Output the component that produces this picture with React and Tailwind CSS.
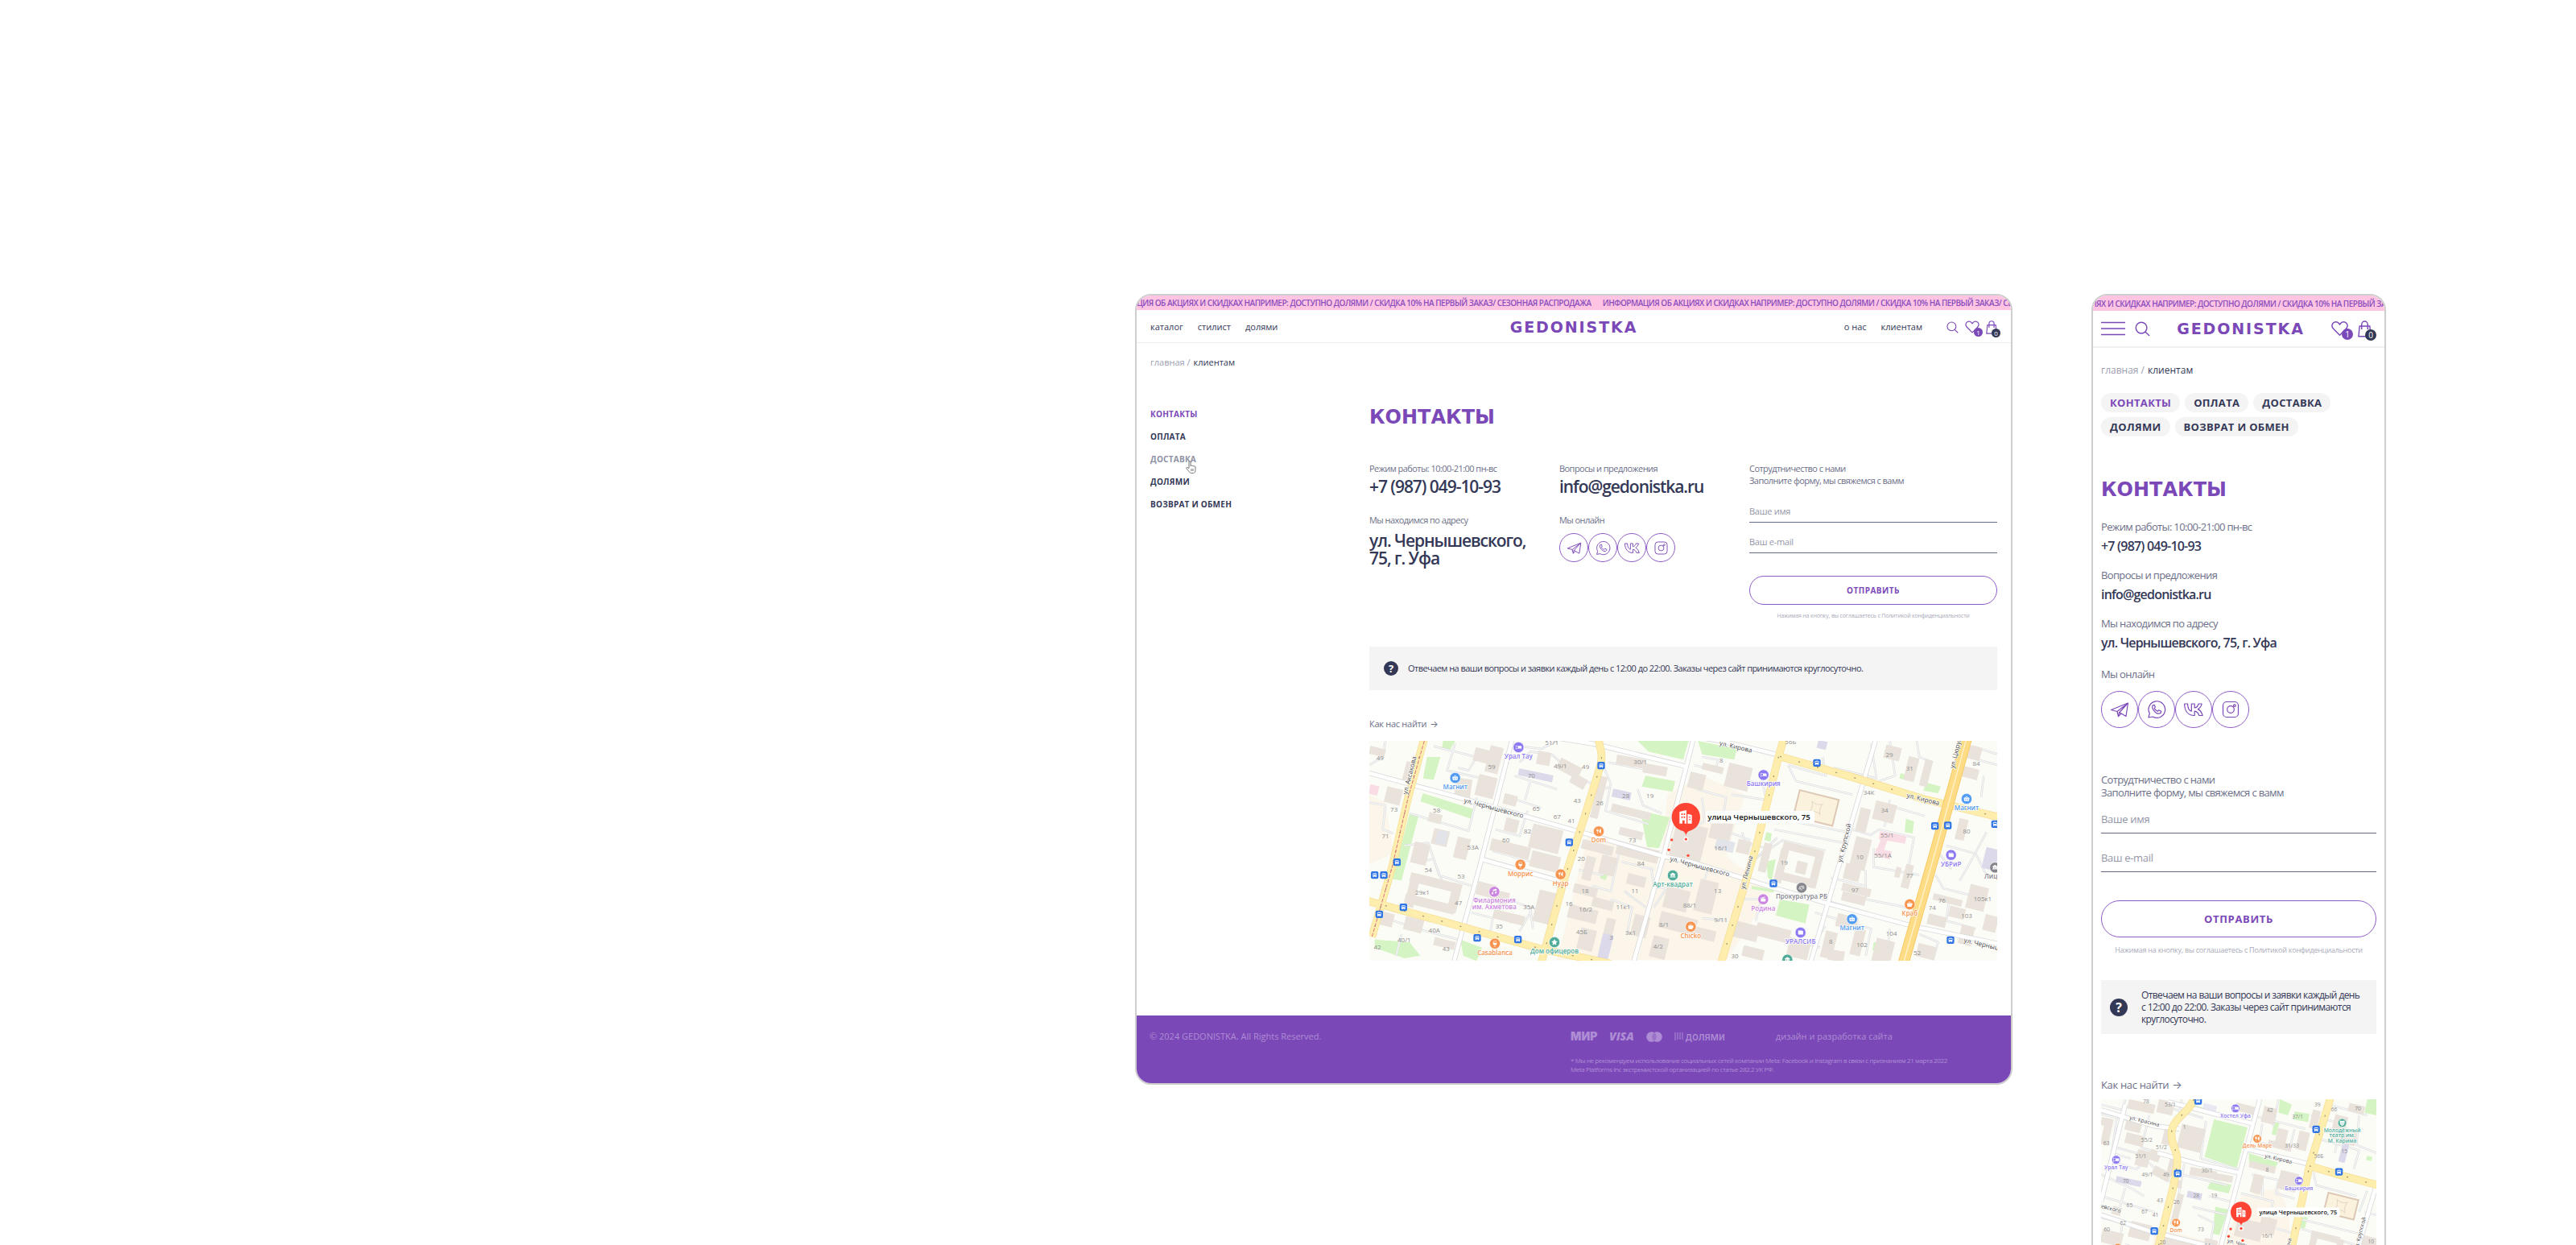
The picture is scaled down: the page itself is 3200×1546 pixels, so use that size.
import React from "react";
import {
  PiBedFill,
  PiBasketFill,
  PiForkKnifeFill,
  PiWineFill,
  PiMusicNotesFill,
  PiStarFill,
  PiCoffeeFill,
  PiBankFill,
  PiScalesFill,
  PiFilmSlateFill,
  PiWalletFill,
  PiBusFill,
  PiMaskHappyFill,
} from "react-icons/pi";

const PROMO =
  "ИНФОРМАЦИЯ ОБ АКЦИЯХ И СКИДКАХ НАПРИМЕР: ДОСТУПНО ДОЛЯМИ / СКИДКА 10% НА ПЕРВЫЙ ЗАКАЗ/ СЕЗОННАЯ РАСПРОДАЖА";

const sections = ["КОНТАКТЫ", "ОПЛАТА", "ДОСТАВКА", "ДОЛЯМИ", "ВОЗВРАТ И ОБМЕН"];

/* ---------- icons ---------- */

const SearchIcon = ({ className }) => (
  <svg viewBox="0 0 20 20" className={className} fill="none" stroke="currentColor" strokeWidth="1.5">
    <circle cx="8.5" cy="8.5" r="7.2" />
    <path d="M13.6 13.8l5.4 5.2" />
  </svg>
);

const HeartIcon = ({ className }) => (
  <svg viewBox="0 0 22 20" className={className} fill="none" stroke="currentColor" strokeWidth="1.5" strokeLinejoin="round">
    <path d="M11 18.6 3 10.6C.6 8 .6 5 2.3 3c2-2.300 5.500-2.200 7.300 0L11 4.700 12.400 3c1.800-2.200 5.300-2.300 7.300 0 1.700 2 1.700 5-.7 7.600z" />
  </svg>
);

const BagIcon = ({ className }) => (
  <svg viewBox="0 0 18 22" className={className} fill="none" stroke="currentColor" strokeWidth="1.5">
    <path d="M2.300 7.300h13.400L17 20.800H1z" />
    <path d="M5 11.500V5a4 4 0 0 1 8 0v6.500" />
  </svg>
);

const socialIcons = [
  {
    name: "Telegram",
    icon: (
      <>
        <path d="M1.500 12.500 22.500 4 20 20.500l-6-3.500-3.500 3.500-1.500-6z" />
        <path d="M9 14.500 22 4.500 11.500 16l-1 4.500M11.500 15.500l2.500 1.500" />
      </>
    ),
  },
  {
    name: "WhatsApp",
    icon: (
      <>
        <path d="M2 22l1.300-5A10.300 10.300 0 1 1 7.200 21z" />
        <path d="M8 6.500c-1.800 1.200-1.800 3.600.2 6.300 2.100 2.900 5.200 5 7.600 4.200 1.300-.4 1.900-1.400 1.900-2.600l-3-1.600-1.500 1.500c-1.700-.6-3.300-2.100-4-3.800l1.200-1.500-1.200-2.700z" />
      </>
    ),
  },
  {
    name: "VK",
    icon: (
      <path d="M12.800 19.500C5.300 19.500.8 14 .6 5h4c.1 5.700 2.500 8.600 4.700 9.200V5h3.900v5c2.100-.2 4.200-2.600 4.900-5h4c-.6 3.200-3 5.600-4.700 6.600 1.700.8 4.500 3.200 5.700 7.900h-4.300c-.8-2.700-2.800-5-5.600-5.300v5.300z" />
    ),
  },
  {
    name: "Instagram",
    icon: (
      <>
        <rect x="2.500" y="2.500" width="19" height="19" rx="4.500" />
        <circle cx="12" cy="12" r="4.300" />
        <circle cx="16.800" cy="7.200" r="1.300" />
      </>
    ),
  },
];

const SocialLinks = ({ linkClass, iconClass }) => (
  <div className="flex text-[#7b48b8]">
    {socialIcons.map(({ name, icon }) => (
      <a
        key={name}
        href="#"
        aria-label={name}
        className={`flex items-center justify-center rounded-full border border-[#8d5cc4] ${linkClass}`}
      >
        <svg viewBox="0 0 24 24" className={iconClass} fill="none" stroke="currentColor" strokeWidth="1.2" strokeLinejoin="round">
          {icon}
        </svg>
      </a>
    ))}
  </div>
);

const Question = ({ className }) => (
  <span className={`flex shrink-0 items-center justify-center rounded-full bg-[#343857] font-bold text-white ${className}`}>
    ?
  </span>
);

const CartButtons = ({ heartClass, bagClass, badgeClass, gapClass }) => (
  <div className={`flex items-center text-[#7b48b8] ${gapClass}`}>
    <button type="button" aria-label="Избранное" className="relative">
      <HeartIcon className={heartClass} />
      <span className={`absolute flex items-center justify-center rounded-full bg-[#7b48b8] text-white ${badgeClass}`}>1</span>
    </button>
    <button type="button" aria-label="Корзина" className="relative">
      <BagIcon className={bagClass} />
      <span className={`absolute flex items-center justify-center rounded-full bg-[#343857] text-white ${badgeClass}`}>0</span>
    </button>
  </div>
);

/* ---------- map ---------- */

// building: [x, y, width, height, tilt]
const desktopMap = {
  width: 2340,
  height: 820,
  zones: [
    "M0 200 60 230 90 420 0 460z",
    "M1110 200 1240 130 1400 200 1330 430 1500 560 1330 817 1000 817 1090 440z",
    "M820 330 1080 430 990 817 700 817z",
  ],
  parks: [
    "M1000 0H1190L1170 70 1040 40z", "M215 60 265 60 240 145 200 140z", "M275 0 320 0 300 35 270 30z",
    "M1030 130 1140 150 1130 190 1015 170z", "M1010 260 1120 285 1080 400 1035 395z", "M200 195 390 255 380 290 190 225z",
    "M150 270 185 275 120 520 85 515z", "M20 740 150 750 190 800 130 810 20 770z", "M340 740 420 770 400 820 350 800z",
    "M1225 0 1370 30 1360 70 1240 50z", "M1980 120 2030 135 2020 150 1975 140z", "M2075 155 2130 170 2120 195 2065 185z",
    "M1530 590 1640 610 1625 680 1515 650z", "M1480 450 1515 440 1500 520 1485 510z", "M2000 290 2030 300 2025 345 1995 340z",
    "M1880 750 1910 755 1900 785 1875 780z", "M515 645 535 650 530 680 510 670z", "M865 465 900 470 880 520 860 510z",
    "M815 430 845 440 840 455 815 450z", "M1480 340 1500 345 1495 375 1472 370z", "M1425 540 1510 555 1505 565 1425 552z",
  ],
  buildings: [
    [0, 25, 60, 30, 14], [60, 175, 60, 60, 14], [130, 80, 50, 70, 14], [390, 30, 60, 50, 14], [400, 130, 70, 80, 14],
    [320, 140, 60, 70, 8], [440, 20, 50, 100, 14], [625, 40, 50, 50, 10], [500, 200, 50, 40, 14], [505, 290, 50, 50, 14],
    [600, 320, 115, 90, 14], [450, 380, 150, 45, 14], [600, 420, 110, 60, 14], [220, 270, 50, 35, 14], [235, 330, 60, 60, 14],
    [160, 380, 60, 80, 14], [320, 360, 50, 80, 14], [150, 510, 180, 35, 14], [130, 590, 190, 35, 14], [140, 520, 35, 100, 14],
    [300, 530, 35, 110, 14], [400, 530, 70, 50, 14], [460, 560, 60, 50, 14], [620, 560, 70, 120, 14], [460, 640, 120, 35, 14],
    [40, 640, 50, 50, 14], [130, 660, 70, 50, 14], [240, 740, 80, 30, 14], [700, 80, 90, 45, 28], [750, 130, 60, 40, 30],
    [840, 130, 30, 160, 14], [920, 60, 110, 35, 10], [1020, 90, 90, 35, 10], [900, 250, 150, 30, 14], [930, 330, 90, 30, 14],
    [790, 380, 120, 35, 14], [800, 430, 35, 90, 14], [860, 430, 60, 70, 14], [920, 390, 160, 50, 14], [960, 500, 70, 40, 14],
    [760, 540, 90, 35, 14], [830, 590, 80, 35, 14], [740, 620, 110, 50, 14], [780, 700, 60, 80, 14], [870, 660, 35, 130, 14],
    [980, 650, 60, 80, 14], [1130, 310, 120, 130, 14], [1240, 90, 80, 25, 14], [1330, 90, 90, 90, 14], [1190, 120, 60, 60, 14],
    [1270, 300, 80, 70, 14], [1370, 370, 50, 50, 14], [1100, 550, 90, 80, 14], [1080, 650, 140, 60, 14], [1050, 730, 60, 80, 14],
    [1220, 520, 70, 120, 14], [1210, 700, 80, 40, 14], [1360, 680, 90, 60, 14], [1440, 690, 130, 50, 14], [1390, 770, 80, 40, 14],
    [1540, 390, 150, 30, 14], [1520, 400, 30, 130, 14], [1650, 410, 30, 140, 14], [1510, 500, 150, 30, 14], [1590, 450, 40, 45, 14],
    [1460, 380, 30, 110, 14], [1880, 230, 80, 70, 14], [1820, 250, 40, 90, 14], [1800, 360, 60, 120, 14], [1770, 460, 60, 60, 14],
    [1760, 540, 110, 30, 14], [1760, 570, 90, 35, 14], [1990, 460, 30, 90, 14], [1960, 470, 20, 40, 14], [2000, 60, 40, 90, 14],
    [1920, 20, 60, 50, 14], [2060, 70, 30, 100, 14], [2190, 290, 35, 80, 14], [2210, 100, 60, 40, 14], [2230, 20, 50, 50, 14],
    [2100, 580, 110, 25, 14], [2230, 540, 70, 90, 14], [2080, 650, 70, 40, 14], [2200, 690, 50, 70, 14], [1880, 740, 70, 90, 14],
    [1740, 650, 80, 50, 14], [1690, 710, 45, 100, 14], [1800, 700, 40, 100, 14], [2040, 760, 70, 50, 14], [2290, 650, 50, 60, 14],
    [1560, 740, 80, 70, 14], [1710, 780, 60, 40, 10], [2160, 620, 60, 40, 14],
  ],
  tinted: [
    ["#dcd9ea", 555, 115, 130, 26, 12], ["#dcd9ea", 905, 185, 70, 30, 12], ["#f9dde4", 0, 165, 34, 36, 14],
    ["#dcd9ea", 1670, 0, 35, 30, 14], ["#f9dde4", 1900, 345, 100, 30, 10], ["#f9dde4", 1885, 405, 60, 30, 14],
    ["#dcd9ea", 2290, 400, 50, 80, 14], ["#dcd9ea", 860, 720, 40, 95, 14], ["#f9dde4", 1900, 355, 25, 60, 20],
    ["#e2e4e9", 250, 335, 40, 50, 14], ["#e2e4e9", 1290, 370, 70, 40, 14],
  ],
  lanes: [
    "M60 0 50 60 0 90", "M240 20 400 60 370 110 330 100M320 10 290 110 420 140", "M0 230 60 240 50 330 90 345",
    "M150 270 370 335 400 210", "M130 390 220 380 260 500 380 540", "M190 450 240 440 270 520", "M470 330 560 355 590 260",
    "M460 410 690 475", "M540 130 700 180M520 210 640 250 M600 150 580 220", "M680 50 780 140 830 160M680 50 600 40 560 80",
    "M560 20 640 30 700 0", "M870 90 900 160 880 260 1040 310", "M890 80 1100 120M900 170 870 180 850 230", "M1000 180 1020 240 1090 270",
    "M800 370 890 400 870 500 780 480", "M930 420 900 560 830 540", "M940 450 1060 480M950 560 1030 620", "M900 590 980 620 960 720",
    "M60 660 180 700 330 740M120 720 100 800", "M380 640 460 660 450 720", "M600 640 560 710M540 600 600 620 610 700",
    "M1220 180 1330 210 1310 330 1420 370", "M1240 210 1250 300 1190 330", "M1350 200 1480 220 1460 130", "M1210 90 1290 110 1300 70 1240 60",
    "M1560 90 1590 150 1800 200M1560 90 1700 130 1690 60", "M1530 290 1780 340 1770 380 1510 330", "M1450 430 1540 370 1700 410",
    "M1730 100 1890 140 1870 10", "M1940 0 1960 130 1900 150M2040 0 2050 60 2100 80", "M1800 330 1870 350 1900 330 2030 360 2010 470",
    "M1880 400 1880 470 2050 500", "M1850 480 1850 590 2000 620", "M1720 510 1850 540M1720 600 1860 640", "M1900 230 2070 280M1940 220 1920 320",
    "M2130 290 2110 400 2170 480M2150 390 2260 420 2300 500", "M2110 500 2140 550 2300 590M2200 520 2230 470 2300 340", "M2160 600 2150 670 2260 700",
    "M1660 640 1870 700 1850 800M1700 690 1660 750", "M1940 700 1930 800M2050 720 2120 750 2100 817", "M2230 60 2340 90M2290 130 2280 210M2250 20 2340 50",
    "M1480 400 1400 380 1390 340M1440 440 1520 360", "M1380 590 1460 590 1440 670", "M1050 470 1060 540 1190 570", "M1150 560 1100 560 1060 620",
    "M1600 750 1680 770M1240 660 1330 670M1260 480 1240 560",
  ],
  streets: [
    "M0 120 366 220 806 345 1096 430 1196 450 1500 545 1706 605 2026 690 2340 755",
    "M531 0 416 450 316 820", "M1206 0 1096 430 986 820", "M1886 0 1646 820", "M640 -20 830 10 1180 95", "M1120 -30 1310 0 1536 55",
    "M416 440 740 530",
  ],
  yellow: [
    "M205 -10 145 210 85 470 10 730", "M-10 595 300 680 640 775 900 830", "M854 -10C858 30 872 40 862 90L800 290 725 520 640 830",
    "M1545 -10 1525 60 1440 400 1310 830", "M1530 58 1800 135 2060 215 2350 285",
  ],
  orange: ["M2226 -10 2110 410 1990 830"],
  rail: "M205 0 145 210 85 470 10 730",
  numbers: [
    ["49", 40, 72], ["59", 456, 106], ["51/1", 680, 16], ["49/1", 712, 102], ["49", 806, 104], ["70", 604, 138], ["30/1", 1010, 86],
    ["73", 92, 264], ["58", 251, 266], ["65", 622, 260], ["67", 700, 290], ["43", 775, 232], ["41", 753, 306], ["26", 859, 240],
    ["28", 956, 212], ["19", 1046, 212], ["82", 590, 344], ["60", 509, 378], ["53А", 386, 406], ["71", 60, 362], ["73", 980, 378],
    ["54", 220, 490], ["53", 342, 512], ["20", 790, 446], ["84", 1012, 464], ["29к1", 198, 574], ["47", 332, 612], ["35А", 595, 626],
    ["35", 484, 700], ["40А", 242, 714], ["40/1", 130, 750], ["42", 30, 776], ["43", 286, 784], ["18", 804, 568], ["16", 744, 616],
    ["16/2", 806, 636], ["11", 990, 568], ["11к1", 946, 626], ["88/1", 1194, 620], ["8/1", 1098, 694], ["4/2", 1076, 774],
    ["3к1", 974, 722], ["45Б", 792, 720], ["3", 902, 740], ["8", 1312, 82], ["56Б", 1570, 12], ["29", 1938, 60], ["31", 2014, 110],
    ["84", 2262, 92], ["34К", 1862, 202], ["34", 1920, 268], ["80", 2226, 346], ["55/1", 1930, 360], ["55/1А", 1914, 434],
    ["16/1", 1310, 408], ["19", 1546, 462], ["10", 1828, 440], ["77", 2014, 510], ["97", 1810, 564], ["13", 1298, 566],
    ["76", 2134, 604], ["105к1", 2286, 596], ["74", 2098, 630], ["103", 2226, 660], ["9/11", 1310, 674], ["104", 1946, 726],
    ["8", 1720, 756], ["102", 1836, 768], ["30", 1362, 810], ["52", 2042, 798],
  ],
  names: [
    ["ул. Аксакова", 158, 130, -76], ["ул. Чернышевского", 462, 258, 15], ["ул. Чернышевского", 1230, 476, 15], ["ул. Кирова", 1364, 30, 13],
    ["ул. Кирова", 2062, 225, 14], ["ул. Ленина", 1414, 492, -76], ["ул. Крупской", 1778, 382, -76], ["ул. Цюрупы", 2196, 38, -76],
    ["ул. Чернышевского", 2326, 776, 13],
  ],
  stops: [
    [864, 92], [745, 378], [103, 452], [20, 500], [54, 500], [127, 620], [37, 646], [402, 734], [554, 740], [1668, 82], [2108, 317],
    [2156, 315], [2332, 310], [1506, 531], [2166, 742],
  ],
  places: [
    ["Урал Тау", 556, 24, "#8d7af2", PiBedFill], ["Магнит", 320, 138, "#519bf0", PiBasketFill], ["Dom", 855, 337, "#f7934c", PiForkKnifeFill],
    ["Моррис", 563, 461, "#f7934c", PiWineFill], ["Нуар", 713, 497, "#f7934c", PiForkKnifeFill],
    ["Филармония|им. Ахметова", 466, 562, "#cb85e0", PiMusicNotesFill], ["Casablanca", 468, 755, "#f7934c", PiWineFill],
    ["Дом офицеров", 690, 750, "#4fac98", PiStarFill], ["Арт-квадрат", 1131, 501, "#4fac98", PiBankFill],
    ["Chicko", 1198, 692, "#f7934c", PiCoffeeFill], ["Башкирия", 1469, 127, "#8d7af2", PiBedFill], ["Магнит", 2226, 216, "#519bf0", PiBasketFill],
    ["УБРиР", 2168, 425, "#8d7af2", PiWalletFill], ["Прокуратура РБ", 1611, 547, "#85858c", PiScalesFill],
    ["Родина", 1468, 590, "#cb85e0", PiFilmSlateFill], ["Магнит", 1799, 664, "#519bf0", PiBasketFill],
    ["Краб", 2014, 609, "#f7934c", PiCoffeeFill], ["УРАЛСИБ", 1607, 714, "#8d7af2", PiWalletFill],
    ["Лицей", 2332, 472, "#85858c", PiBankFill], ["", 1558, 815, "#4fac98", PiBankFill],
  ],
  theatre: [1590, 200, 150, 100],
  pin: [1180, 284, 53],
  pinText: 29,
};

const mobileMap = {
  width: 1024,
  height: 640,
  zones: ["M520 360 660 330 700 420 700 640 440 640 470 520z", "M200 480 450 540 430 640 180 640z"],
  parks: [
    "M420 75 545 105 505 255 385 215z", "M410 300 485 318 475 350 395 332z", "M425 400 475 410 440 505 415 500z", "M550 200 660 235 640 265 550 235z",
    "M665 0 710 20 695 60 660 50z", "M720 45 775 55 770 85 715 75z", "M645 80 665 85 650 135 635 130z", "M990 0 1024 0 1024 60 980 50z",
    "M340 20 390 35 380 50 340 35z", "M740 440 770 435 755 490 742 480z", "M990 210 1010 215 1005 230 985 225z",
  ],
  buildings: [
    [100, 10, 100, 35, 12], [210, 5, 60, 50, 12], [0, 70, 45, 30, 12], [5, 90, 30, 80, 12], [90, 80, 60, 40, 14], [90, 130, 70, 40, 14],
    [130, 190, 50, 60, 14], [290, 100, 90, 90, 14], [230, 110, 30, 60, 14], [250, 220, 40, 60, 14], [180, 190, 40, 40, 20],
    [190, 260, 70, 35, 28], [270, 350, 25, 120, 14], [330, 260, 100, 30, 10], [420, 280, 70, 25, 10], [40, 400, 35, 30, 14],
    [105, 460, 80, 60, 14], [0, 490, 80, 50, 14], [500, 450, 100, 70, 14], [550, 240, 100, 25, 14], [560, 280, 40, 70, 14],
    [660, 270, 70, 70, 14], [620, 160, 90, 25, 14], [650, 110, 40, 70, 14], [730, 120, 40, 70, 14], [600, 30, 50, 60, 14],
    [500, 20, 70, 30, 14], [780, 40, 30, 70, 14], [860, 60, 50, 90, 14], [900, 110, 50, 60, 14], [920, 20, 60, 30, 14], [590, 440, 60, 60, 14],
    [780, 500, 110, 25, 14], [770, 510, 25, 90, 14], [870, 520, 25, 90, 14], [960, 510, 60, 90, 14],
    [210, 520, 140, 40, 14], [380, 520, 50, 50, 14], [100, 580, 80, 40, 14], [730, 300, 40, 30, 14], [270, 300, 30, 30, 14],
  ],
  tinted: [["#dcd9ea", 55, 295, 95, 22, 12], ["#dcd9ea", 320, 345, 55, 25, 12], ["#dcd9ea", 890, 165, 25, 70, 14], ["#e8e8f2", 380, 20, 50, 20, 14]],
  lanes: [
    "M90 0 80 40 0 20M0 55 200 100", "M60 60 40 200 110 220M60 180 200 220", "M180 60 150 180 250 210", "M30 230 130 260 180 220",
    "M170 230 260 310 300 330", "M0 280 110 330 160 360", "M0 360 200 420M90 330 70 400", "M300 280 470 320M310 240 290 350 280 400",
    "M340 400 470 430M400 360 480 380", "M360 430 420 460 410 520", "M250 30 380 70M300 0 290 60", "M390 80 370 220 510 260",
    "M560 60 760 110M660 0 640 100", "M600 90 590 160 700 190 720 110", "M560 280 660 300 650 350 720 370", "M600 300 600 360M520 350 640 380 620 460",
    "M780 60 890 90 870 200M850 20 990 60", "M820 150 960 190 940 260", "M790 270 800 320 950 360M960 60 950 170 1024 200",
    "M720 440 960 500M740 480 940 540 920 640", "M650 480 720 500 700 560", "M0 440 80 460 70 520M90 540 190 570", "M240 500 330 530 320 600",
    "M340 560 430 580M980 420 1024 430M990 340 960 420",
  ],
  streets: [
    "M0 40 200 100 290 110", "M90 20 0 380", "M0 430 180 490 460 560 560 590 720 640", "M590 0 510 300 450 530 430 640",
    "M250 10 560 90", "M210 200 360 240 520 275", "M540 185 790 245", "M1024 320 930 640",
  ],
  yellow: [
    "M345 0C330 50 262 70 262 130 262 180 290 190 282 250L270 320 240 440 190 640", "M855 -10 775 250 690 640", "M775 248 900 285 1030 320",
  ],
  orange: [],
  rail: "",
  numbers: [
    ["53/1", 257, 26], ["78", 168, 14], ["55/2", 170, 158], ["51/2", 224, 186], ["63", 20, 172], ["51/1", 148, 220], ["49/1", 172, 286],
    ["49", 242, 286], ["70", 92, 310], ["1", 310, 112], ["30/1", 394, 272], ["28", 354, 366], ["19", 421, 366], ["43", 219, 382],
    ["26", 281, 388], ["65", 106, 402], ["67", 162, 424], ["41", 202, 436], ["62", 82, 466], ["60", 22, 490], ["73", 371, 490], ["20", 229, 540],
    ["42", 628, 48], ["37/1", 731, 72], ["39", 805, 26], ["66", 867, 44], ["70", 955, 42], ["31/33", 710, 180], ["56Б", 810, 218],
    ["15", 905, 202], ["8", 618, 270], ["16/1", 618, 514], ["10", 1004, 536], ["84", 396, 550],
  ],
  names: [
    ["ул. Красина", 160, 88, 14], ["ул. Кирова", 658, 228, 13], ["ул. Чернышевского", -20, 398, 15], ["ул. Чернышевского", 560, 556, 15],
    ["ул. Крупской", 970, 500, -76], ["ул. Ленина", 696, 570, -76],
  ],
  stops: [[361, 6], [800, 112], [285, 276], [885, 270], [198, 490]],
  places: [
    ["Хостел Уфа", 500, 34, "#8d7af2", PiBedFill], ["Дель Маре", 581, 147, "#f7934c", PiForkKnifeFill], ["Урал Тау", 56, 225, "#8d7af2", PiBedFill],
    ["Башкирия", 736, 303, "#8d7af2", PiBedFill], ["Dom", 279, 459, "#f7934c", PiForkKnifeFill],
    ["Молодёжный|театр им.|М. Карима", 897, 88, "#4fac98", PiMaskHappyFill], ["", 62, 552, "#f7934c", PiWineFill],
  ],
  theatre: [835, 360, 115, 75],
  pin: [521, 420, 39],
  pinText: 22,
};

const CityMap = ({ data, textSize, iconSize }) => {
  const [pinX, pinY, pinR] = data.pin;
  const [tx, ty, tw, th] = data.theatre;
  const labelWidth = data.pinText * 14;
  return (
    <svg
      viewBox={`0 0 ${data.width} ${data.height}`}
      role="img"
      aria-label="Карта: улица Чернышевского, 75"
      className="block w-full overflow-hidden font-['Open_Sans','Noto_Sans',sans-serif]"
    >
      <rect width={data.width} height={data.height} fill="#fcfcf7" />
      {data.zones.map((d) => <path key={d} d={d} fill="#fbf5ea" />)}
      {data.parks.map((d) => <path key={d} d={d} fill="#d5f4c3" />)}
      {data.lanes.map((d) => (
        <g key={d} fill="none" strokeLinejoin="round">
          <path d={d} stroke="#dfe0e2" strokeWidth="8" />
          <path d={d} stroke="#fbfbfa" strokeWidth="3" />
        </g>
      ))}
      {data.buildings.map(([x, y, w, h, tilt]) => (
        <rect key={`${x}-${y}`} x={x} y={y} width={w} height={h} fill="#e9e3db" transform={`rotate(${tilt} ${x + w / 2} ${y + h / 2})`} />
      ))}
      {data.tinted.map(([fill, x, y, w, h, tilt]) => (
        <rect key={`${x}-${y}`} x={x} y={y} width={w} height={h} fill={fill} transform={`rotate(${tilt} ${x + w / 2} ${y + h / 2})`} />
      ))}
      <g transform={`rotate(14 ${tx + tw / 2} ${ty + th / 2})`}>
        <rect x={tx} y={ty} width={tw} height={th} fill="#fbf2de" stroke="#dcc8b4" strokeWidth="6" />
        <path d={`M${tx + tw / 2 - 20} ${ty + th / 2 - 20}q20 12 40 0q-10 20 0 40q-20-12-40 0q10-20 0-40z`} fill="none" stroke="#e3d8c6" strokeWidth="3" />
      </g>
      <g fill="none" strokeLinejoin="round">
        {data.streets.map((d) => <path key={d} d={d} stroke="#d9dadc" strokeWidth="19" />)}
        {data.streets.map((d) => <path key={d} d={d} stroke="#ffffff" strokeWidth="14" />)}
        {data.yellow.map((d) => <path key={d} d={d} stroke="#f5dc8f" strokeWidth="29" />)}
        {data.yellow.map((d) => <path key={d} d={d} stroke="#feeeae" strokeWidth="25" />)}
        {data.yellow.map((d) => <path key={d} d={d} stroke="#a3946b" strokeWidth="4" strokeDasharray="6 66" />)}
        {data.orange.map((d) => (
          <g key={d}>
            <path d={d} stroke="#f7cb66" strokeWidth="42" />
            <path d={d} stroke="#fddc85" strokeWidth="36" />
            <path d={d} stroke="#fff3cf" strokeWidth="4" />
          </g>
        ))}
        {data.rail && <path d={data.rail} stroke="#d9727c" strokeWidth="3" strokeDasharray="14 5" />}
      </g>
      <g fill="#8e8e8e" fontSize={textSize} textAnchor="middle">
        {data.numbers.map(([label, x, y]) => <text key={`${x}-${y}`} x={x} y={y}>{label}</text>)}
      </g>
      <g fill="#444444" fontSize={textSize} textAnchor="middle" stroke="#ffffff" strokeWidth="4" paintOrder="stroke">
        {data.names.map(([label, x, y, angle]) => (
          <text key={`${x}-${y}`} x={x} y={y} transform={`rotate(${angle} ${x} ${y})`}>{label}</text>
        ))}
      </g>
      {data.stops.map(([x, y]) => (
        <g key={`${x}-${y}`}>
          <rect x={x - 14} y={y - 14} width="28" height="28" rx="6" fill="#2f74e4" />
          <PiBusFill x={x - 10} y={y - 10} size={20} color="#ffffff" />
        </g>
      ))}
      {data.places.map(([label, x, y, color, Icon]) => (
        <g key={`${x}-${y}`}>
          <circle cx={x} cy={y} r={iconSize} fill={color} stroke="#ffffff" strokeWidth="2" />
          <Icon x={x - 12} y={y - 12} size={24} color="#ffffff" />
          <g fill={color} fontSize={textSize} fontWeight="600" textAnchor="middle" stroke="#ffffff" strokeWidth="4" paintOrder="stroke">
            {label.split("|").map((line, i) => (
              <text key={line} x={x} y={y + iconSize + textSize - 2 + i * textSize}>{line}</text>
            ))}
          </g>
        </g>
      ))}
      <g fill="#ff4433">
        <circle cx={pinX} cy={pinY} r={pinR} />
        <path d={`M${pinX - pinR * 0.4} ${pinY + pinR * 0.88}Q${pinX} ${pinY + pinR} ${pinX} ${pinY + pinR * 1.35}Q${pinX} ${pinY + pinR} ${pinX + pinR * 0.4} ${pinY + pinR * 0.88}z`} />
        <circle cx={pinX} cy={pinY + pinR * 1.55} r="7" stroke="#ffffff" strokeWidth="4" />
        <circle cx={pinX - pinR} cy={pinY + pinR * 1.6} r="5" />
        <circle cx={pinX - pinR * 1.2} cy={pinY + pinR * 2.3} r="5" />
        <circle cx={pinX + pinR * 0.15} cy={pinY + pinR * 2.7} r="5" />
      </g>
      <g transform={`translate(${pinX} ${pinY}) scale(${pinR / 53})`}>
        <path d="M-24-20 2-26V24H-5V12H-13V24H-24zM6-12 22-8V24H6z" fill="#ffffff" />
        <path d="M-17-14h5v6h-5zM-8-14h5v6h-5zM-17-3h5v6h-5zM-8-3h5v6h-5zM12-2h5v4h-5zM12 7h5v4h-5z" fill="#ff4433" />
      </g>
      <rect x={pinX + pinR + 20} y={pinY - data.pinText * 0.8} width={labelWidth} height={data.pinText * 1.6} rx="8" fill="#ffffff" />
      <text x={pinX + pinR + 28} y={pinY + data.pinText * 0.36} fontSize={data.pinText} fontWeight="600" fill="#111111">
        улица Чернышевского, 75
      </text>
    </svg>
  );
};

/* ---------- shared blocks ---------- */

const Logo = () => (
  <a href="#" className="font-['DejaVu_Sans',sans-serif] text-[19px] leading-6 font-bold tracking-widest text-[#7b48b8]">
    GEDONISTKA
  </a>
);

const Title = () => (
  <h1 className="font-['DejaVu_Sans',sans-serif] text-2xl leading-6 font-bold text-[#7b48b8]">КОНТАКТЫ</h1>
);

const Field = ({ id, type, label, className }) => (
  <div>
    <label htmlFor={id} className="sr-only">{label}</label>
    <input
      id={id}
      type={type}
      placeholder={label}
      className={`block w-full border-b border-[#666b85] bg-transparent tracking-tight outline-none placeholder:text-[#9496a8] ${className}`}
    />
  </div>
);

const FindUs = ({ className }) => (
  <a href="#" className={`flex gap-1 tracking-tight text-[#6d7089] ${className}`}>
    Как нас найти
    <span className="font-['Inter',sans-serif]">→</span>
  </a>
);

/* ---------- desktop page ---------- */

const DesktopPage = () => (
  <div className="overflow-hidden rounded-[20px] border-2 border-[#cecece] bg-white text-[11px] leading-4 text-[#343857]">
    <div className="flex h-[18px] items-center gap-[14px] bg-[#ffc4e1] text-[10px] font-semibold tracking-tighter whitespace-nowrap text-[#8a4fc0]">
      <div className="flex basis-[52%] justify-end overflow-hidden">{PROMO}</div>
      <div className="min-w-0 flex-1 overflow-hidden">{PROMO}</div>
    </div>

    <header className="grid h-[41px] grid-cols-[1fr_auto_1fr] items-center border-b border-[#ececec] px-[17px] pt-0.5">
      <nav className="flex gap-[18px]">
        <a href="#">каталог</a>
        <a href="#">стилист</a>
        <a href="#">долями</a>
      </nav>
      <Logo />
      <div className="flex items-center justify-end">
        <nav className="flex gap-[18px]">
          <a href="#">о нас</a>
          <a href="#">клиентам</a>
        </nav>
        <button type="button" aria-label="Поиск" className="mr-2 ml-[30px] text-[#7b48b8]">
          <SearchIcon className="size-[15px]" />
        </button>
        <CartButtons
          gapClass="gap-2"
          heartClass="h-4 w-[18px]"
          bagClass="h-[17px] w-[14px]"
          badgeClass="-right-1 -bottom-1 size-[11px] text-[8px] leading-[11px]"
        />
      </div>
    </header>

    <main className="px-[17px] pt-4 pb-17">
      <nav className="flex gap-1">
        <a href="#" className="text-[#9c9dae]">главная /</a>
        <a href="#">клиентам</a>
      </nav>

      <div className="mt-12 grid grid-cols-[minmax(0,272fr)_minmax(0,780fr)]">
        <nav className="flex flex-col items-start gap-3 text-[10px] font-bold tracking-wide">
          {sections.map((section, index) => (
            <a
              key={section}
              href="#"
              className={`relative leading-4 ${index === 0 ? "text-[#7b48b8]" : index === 2 ? "text-[#8f90a3]" : ""}`}
            >
              {section}
              {index === 2 && (
                <svg viewBox="0 0 13 16" className="absolute top-2.5 right-0 h-4 w-[13px]" fill="#ffffff" stroke="#777777" strokeLinejoin="round">
                  <path d="M4 9.500V1.800C4 .3 6 .3 6 1.800V6.500c.3-1 1.900-.9 2 .3.400-.9 1.800-.7 2 .5.400-.8 1.900-.6 2 .6v3.600c0 2.400-1 4-2.500 4H6.800C4.800 15.500 3.500 12.500.9 9.800c-.8-1 .3-1.900 1.300-1.200z" />
                  <path d="M7 10v3M9 10v3" />
                </svg>
              )}
            </a>
          ))}
        </nav>

        <div>
          <Title />
          <div className="mt-11 grid grid-cols-[minmax(0,236fr)_minmax(0,236fr)_minmax(0,308fr)]">
            <div>
              <p className="tracking-tighter text-[#6d7089]">Режим работы: 10:00-21:00 пн-вс</p>
              <a href="tel:+79870491093" className="block text-[21px] leading-7 font-semibold tracking-tighter">+7 (987) 049-10-93</a>
              <p className="mt-5 tracking-tighter text-[#6d7089]">Мы находимся по адресу</p>
              <p className="mt-1.5 text-[21px] leading-[22px] font-semibold tracking-tighter">
                ул. Чернышевского,
                <br />
                75, г. Уфа
              </p>
            </div>
            <div>
              <p className="tracking-tighter text-[#6d7089]">Вопросы и предложения</p>
              <a href="mailto:info@gedonistka.ru" className="block text-[21px] leading-7 font-semibold tracking-tighter">info@gedonistka.ru</a>
              <p className="mt-5 mb-2 tracking-tighter text-[#6d7089]">Мы онлайн</p>
              <SocialLinks linkClass="size-9" iconClass="size-[19px]" />
            </div>
            <form>
              <p className="mb-5 leading-[15px] tracking-tighter text-[#6d7089]">
                Сотрудтничество с нами
                <br />
                Заполните форму, мы свяжемся с вамм
              </p>
              <div className="flex flex-col gap-[13px]">
                <Field id="name" type="text" label="Ваше имя" className="h-[25px] pb-[3px]" />
                <Field id="email" type="email" label="Ваш e-mail" className="h-[25px] pb-[3px]" />
              </div>
              <button type="button" className="mt-7 h-9 w-full rounded-full border border-[#8d5cc4] text-[10px] font-bold tracking-wider text-[#7b48b8]">
                ОТПРАВИТЬ
              </button>
              <p className="mt-2 text-center text-[7px] leading-3 tracking-tight text-[#a9aab8]">
                Нажимая на кнопку, вы соглашаетесь с Политикой конфиденциальности
              </p>
            </form>
          </div>

          <div className="mt-8 flex items-center gap-3 bg-[#f4f4f4] px-[18px] py-[19px]">
            <Question className="-my-px size-[18px] text-[13px]" />
            <p className="tracking-tighter">
              Отвечаем на ваши вопросы и заявки каждый день с 12:00 до 22:00. Заказы через сайт принимаются круглосуточно.
            </p>
          </div>

          <FindUs className="mt-[34px] mb-[13px]" />
          <CityMap data={desktopMap} textSize={24} iconSize={20} />
        </div>
      </div>
    </main>

    <footer className="grid grid-cols-[minmax(0,523fr)_minmax(0,531fr)] bg-[#7b48b8] px-4 pt-[18px] pb-3 text-[#ae8dd4]">
      <p>© 2024 GEDONISTKA. All Rights Reserved.</p>
      <div>
        <div className="flex h-4 items-center gap-[15px]">
          <span className="w-[33px] font-['Inter',sans-serif] text-[14px] font-black">МИР</span>
          <span className="text-[14px] font-extrabold italic">VISA</span>
          <svg viewBox="0 0 20 13" className="h-[13px] w-5" fill="currentColor" aria-label="Mastercard">
            <circle cx="6.500" cy="6.500" r="6.300" />
            <circle cx="13.500" cy="6.500" r="6.300" />
            <path d="M10 1.300a6.300 6.300 0 0 0 0 10.400a6.300 6.300 0 0 0 0-10.400z" fill="#9a72c8" />
          </svg>
          <span className="flex items-center gap-[3px] font-['Inter',sans-serif] text-[13px] font-medium">
            <svg viewBox="0 0 11 10" className="h-[10px] w-[11px]" stroke="currentColor" aria-hidden="true">
              <path d="M1 0v10M4 0v9M7 0v9M10 0v9" />
            </svg>
            долями
          </span>
          <a href="#" className="ml-12">дизайн и разработка сайта</a>
        </div>
        <p className="mt-4 text-[8px] leading-[11px] tracking-tighter">
          * Мы не рекомендуем использование социальных сетей компании Meta: Facebook и Instagram в связи с признанием 21 марта 2022
          <br />
          Meta Platforms Inc экстремистской организацией по статье 282.2 УК РФ.
        </p>
      </div>
    </footer>
  </div>
);

/* ---------- mobile page ---------- */

const contacts = [
  { label: "Режим работы: 10:00-21:00 пн-вс", value: "+7 (987) 049-10-93" },
  { label: "Вопросы и предложения", value: "info@gedonistka.ru" },
  { label: "Мы находимся по адресу", value: "ул. Чернышевского, 75, г. Уфа" },
];

const MobilePage = () => (
  <div className="overflow-hidden rounded-[20px] border-2 border-[#cecece] bg-white text-[13px] leading-5 text-[#343857]">
    <div className="flex h-[19px] items-center justify-center overflow-hidden bg-[#ffc4e1] pl-8 text-[10px] font-semibold tracking-tighter whitespace-nowrap text-[#8a4fc0]">
      <span>{PROMO}</span>
    </div>

    <header className="flex h-[46px] items-center justify-between border-b-2 border-[#f0f0f0] px-2.5">
      <div className="flex items-center gap-3 text-[#7b48b8]">
        <button type="button" aria-label="Меню">
          <svg viewBox="0 0 30 18" className="h-[18px] w-[30px]" stroke="currentColor" strokeWidth="1.5">
            <path d="M0 1.500h30M0 9h30M0 16.500h30" />
          </svg>
        </button>
        <button type="button" aria-label="Поиск">
          <SearchIcon className="size-[19px]" />
        </button>
      </div>
      <Logo />
      <CartButtons
        gapClass="gap-3 pr-1.5"
        heartClass="h-5 w-[21px]"
        bagClass="h-[21px] w-[17px]"
        badgeClass="-right-1.5 -bottom-1 size-[14px] text-[10px] leading-[14px]"
      />
    </header>

    <main className="px-2.5">
      <nav className="mt-5 flex gap-1 text-[12px] leading-4">
        <a href="#" className="text-[#9c9dae]">главная /</a>
        <a href="#">клиентам</a>
      </nav>

      <nav className="mt-5 flex flex-wrap gap-1.5 font-bold tracking-wide">
        {sections.map((section, index) => (
          <a
            key={section}
            href="#"
            className={`rounded-full bg-[#f4f4f4] px-[11px] py-0.5 ${index === 0 ? "text-[#7b48b8]" : ""}`}
          >
            {section}
          </a>
        ))}
      </nav>

      <div className="mt-[54px] mb-6">
        <Title />
      </div>

      <div className="flex flex-col gap-3">
        {contacts.map(({ label, value }) => (
          <div key={label}>
            <p className="tracking-tighter text-[#6d7089]">{label}</p>
            <p className="text-[16px] leading-7 font-semibold tracking-tighter">{value}</p>
          </div>
        ))}
      </div>
      <p className="mt-[15px] mb-[11px] tracking-tighter text-[#6d7089]">Мы онлайн</p>
      <SocialLinks linkClass="size-[46px]" iconClass="size-6" />

      <form className="mt-14">
        <p className="mb-[11px] leading-4 tracking-tighter text-[#6d7089]">
          Сотрудтничество с нами
          <br />
          Заполните форму, мы свяжемся с вамм
        </p>
        <div className="flex flex-col gap-4">
          <Field id="mobile-name" type="text" label="Ваше имя" className="h-8 pb-1" />
          <Field id="mobile-email" type="email" label="Ваш e-mail" className="h-8 pb-1" />
        </div>
        <button type="button" className="mt-[35px] h-[46px] w-full rounded-full border border-[#8d5cc4] font-bold tracking-wider text-[#7b48b8]">
          ОТПРАВИТЬ
        </button>
        <p className="mt-2 text-center text-[9px] leading-4 tracking-tight text-[#a9aab8]">
          Нажимая на кнопку, вы соглашаетесь с Политикой конфиденциальности
        </p>
      </form>

      <div className="mt-[29px] flex items-center gap-[17px] bg-[#f4f4f4] py-[11px] pr-1 pl-[11px]">
        <Question className="size-[22px] text-[16px]" />
        <p className="text-[12px] leading-[15px] tracking-tighter">
          Отвечаем на ваши вопросы и заявки каждый день с&nbsp;12:00 до 22:00. Заказы через сайт принимаются круглосуточно.
        </p>
      </div>

      <FindUs className="mt-[53px] mb-2" />
      <CityMap data={mobileMap} textSize={20} iconSize={16} />
    </main>
  </div>
);

const App = () => {
  return (
    <div className="grid h-screen grid-cols-[minmax(0,2500fr)_minmax(0,98fr)_minmax(0,366fr)_minmax(0,236fr)] overflow-hidden bg-white font-['Open_Sans','Noto_Sans',sans-serif]">
      <div className="flex flex-col justify-between pt-[365px]">
        <div className="pl-[56.4%]">
          <DesktopPage />
        </div>
        {/* top edges of the next row of artboards */}
        <div className="grid grid-cols-[235fr_1067fr_119fr_342fr_737fr]">
          <div className="col-start-2 h-px bg-[#aaaaaa]" />
          <div className="col-start-4 h-px bg-[#aaaaaa]" />
        </div>
      </div>
      <div className="col-start-3 pt-[365px]">
        <MobilePage />
      </div>
    </div>
  );
};

export default App;
